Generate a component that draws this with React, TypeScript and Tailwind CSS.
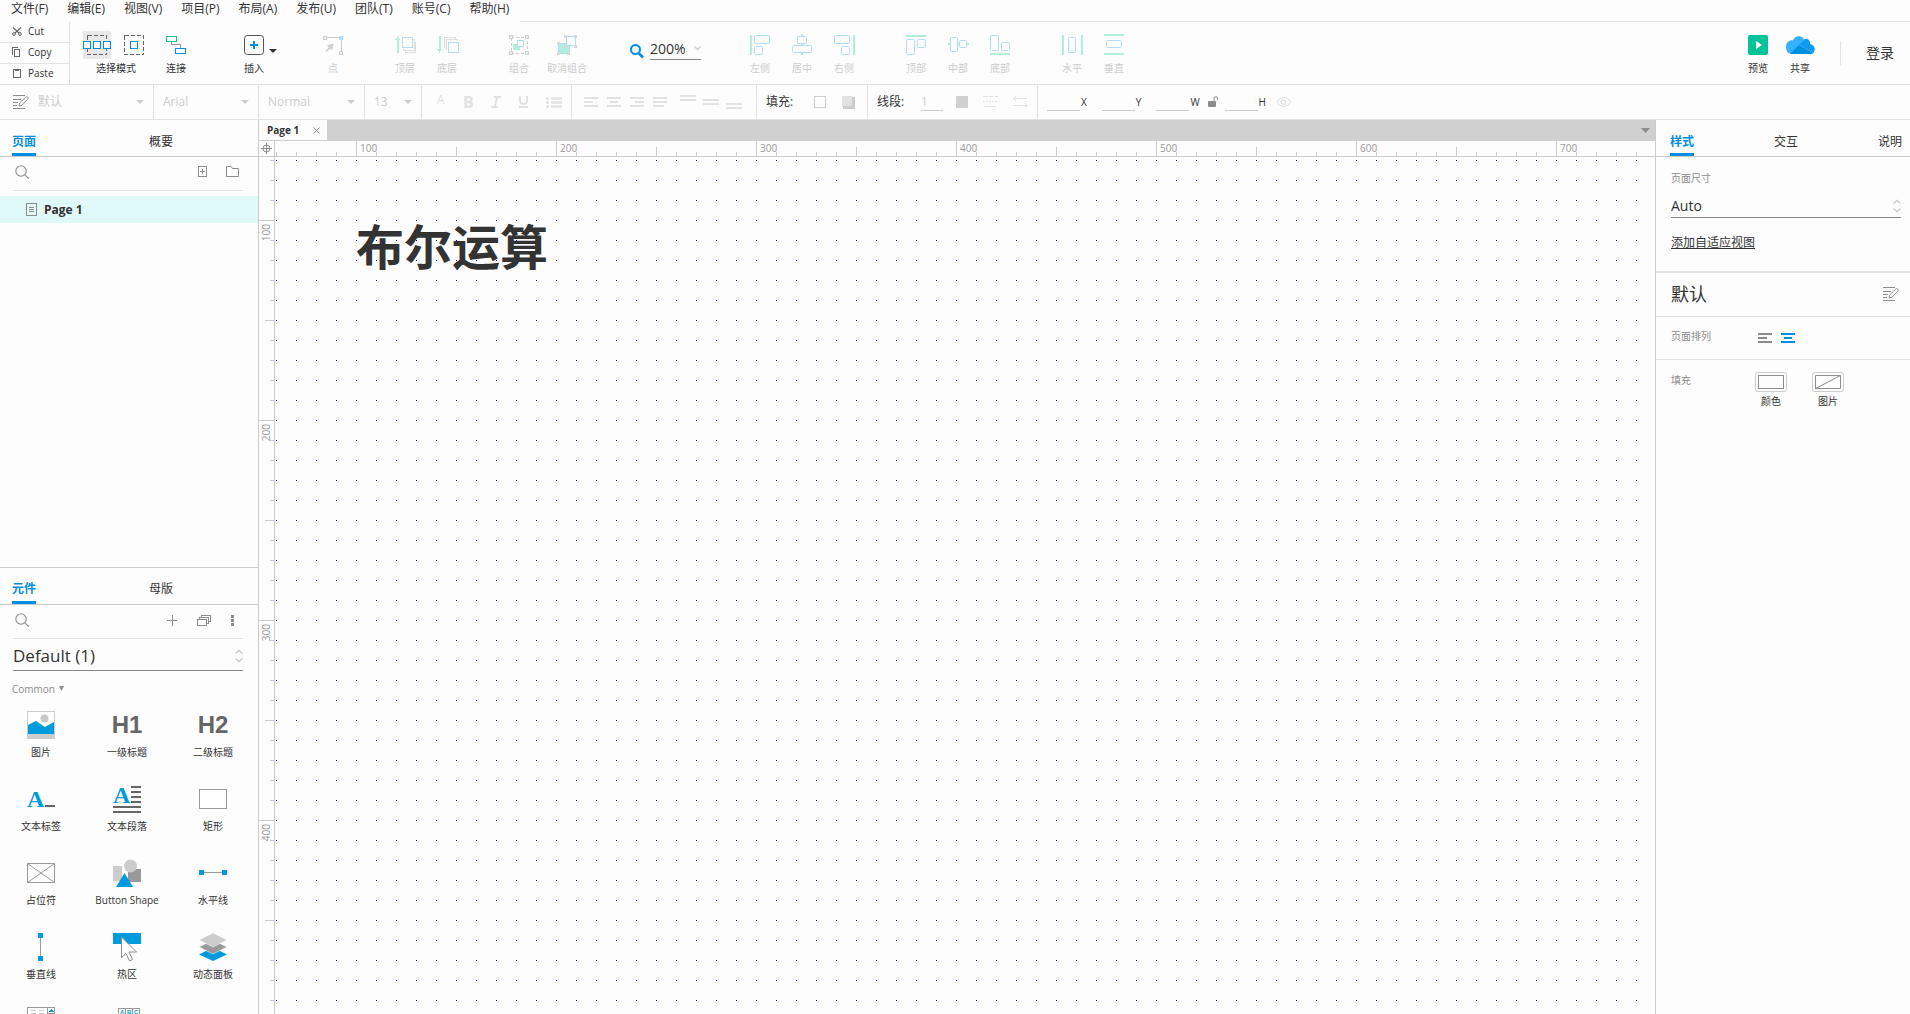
import type { ReactNode } from "react";

const menus = ["文件(F)", "编辑(E)", "视图(V)", "项目(P)", "布局(A)", "发布(U)", "团队(T)", "账号(C)", "帮助(H)"];

const hMarks = [100, 200, 300, 400, 500, 600, 700];
const vMarks = [100, 200, 300, 400];

type SvgProps = { w: number; h: number; children: ReactNode; smooth?: boolean };

function Svg({ w, h, children, smooth }: SvgProps) {
  return (
    <svg
      width={w}
      height={h}
      viewBox={`0 0 ${w} ${h}`}
      fill="none"
      shapeRendering={smooth ? "auto" : "crispEdges"}
      className="block shrink-0 overflow-visible"
      aria-hidden="true"
    >
      {children}
    </svg>
  );
}

/* ---------- small shared icons ---------- */

function Caret({ color = "#ccc" }: { color?: string }) {
  return (
    <Svg w={8} h={4} smooth>
      <path d="M0 0h8L4 4z" fill={color} />
    </Svg>
  );
}

function UpDown() {
  return (
    <Svg w={8} h={14} smooth>
      <path d="M0.5 4.5 4 1.5 7.5 4.5M0.5 9.5 4 12.5 7.5 9.5" stroke="#ccc" strokeWidth="1.4" />
    </Svg>
  );
}

function SearchIcon() {
  return (
    <Svg w={14} h={14} smooth>
      <circle cx="6" cy="6" r="5.2" stroke="#8c8c8c" strokeWidth="1.1" />
      <path d="m9.8 9.8 4 4" stroke="#8c8c8c" strokeWidth="1.1" />
    </Svg>
  );
}

function StyleIcon() {
  return (
    <Svg w={16} h={14} smooth>
      <path d="M0 .5h12M0 4.5h8M0 7.5h5M0 10.5h4M0 13.5h12" stroke="#8c8c8c" />
      <path d="m6 11 .8-3.2 5.8-5.6a1.4 1.4 0 0 1 2.2 2L9 10.2z" stroke="#8c8c8c" fill="#fdfdfd" />
    </Svg>
  );
}

const G = "#b0eede";
const B = "#b3ddf5";
const H = "#d0d0d0";

function Handle({ x, y, fill = "#eee", stroke = H }: { x: number; y: number; fill?: string; stroke?: string }) {
  return <rect x={x + 0.5} y={y + 0.5} width="3" height="3" fill={fill} stroke={stroke} />;
}

/* ---------- toolbar ---------- */

type ToolProps = { label: string; wide?: boolean; active?: boolean; children: ReactNode };

function Tool({ label, wide, active, children }: ToolProps) {
  return (
    <button type="button" className={`flex flex-col items-center ${wide ? "w-[54px]" : "w-[42px]"}`}>
      <span className="flex h-5 items-start justify-center">{children}</span>
      <span className={`mt-[5px] text-[10px] leading-4 whitespace-nowrap ${active ? "text-[#333]" : "text-[#ccc]"}`}>
        {label}
      </span>
    </button>
  );
}

function ClipboardActions() {
  const row = "flex flex-1 items-center gap-1.5 px-3 pb-0.5 text-[10px] leading-4";
  return (
    <div className="flex w-[70px] shrink-0 flex-col divide-y divide-[#e2e2e2] border-r border-[#e2e2e2]">
      <button type="button" className={row}>
        <Svg w={10} h={10} smooth>
          <path d="M1 1.5 7 7M9 1.5 3 7" stroke="#666" strokeWidth="1.1" />
          <circle cx="2" cy="8" r="1.4" stroke="#666" />
          <circle cx="8" cy="8" r="1.4" stroke="#666" />
        </Svg>
        Cut
      </button>
      <button type="button" className={row}>
        <Svg w={10} h={10}>
          <path d="M.5 7.500V.5h5M2.500 2.500h5v7h-5z" stroke="#666" />
        </Svg>
        Copy
      </button>
      <button type="button" className={row}>
        <Svg w={10} h={10}>
          <rect x="1.500" y="1.500" width="7" height="8" stroke="#666" />
          <path d="M3 1h4v2H3z" fill="#666" />
        </Svg>
        Paste
      </button>
    </div>
  );
}

function Toolbar() {
  return (
    <div className="flex h-[63px] shrink-0 border-b border-[#e2e2e2]">
      <ClipboardActions />
      <div className="flex min-w-0 flex-1 pt-[13px]">
        <div className="ml-[13px] w-[66px]">
          <div className="flex h-5 gap-[13px]">
            <button type="button" aria-label="相交选中" className="-mt-1 h-7 w-7 bg-[#e8e8e8]">
              <Svg w={28} h={28}>
                <rect x="4.500" y="4.500" width="19" height="19" stroke="#666" strokeDasharray="4 2" />
                <path d="M.5 10.500h7v7h-7zM10.500 10.500h7v7h-7zM20.500 10.500h7v7h-7z" fill="#fff" stroke="#008ee0" />
              </Svg>
            </button>
            <button type="button" aria-label="包含选中">
              <Svg w={20} h={20}>
                <rect x=".5" y=".5" width="19" height="19" stroke="#666" strokeDasharray="4 2" />
                <rect x="6.500" y="6.500" width="7" height="7" stroke="#008ee0" />
              </Svg>
            </button>
          </div>
          <div className="mt-[5px] text-center text-[10px] leading-4">选择模式</div>
        </div>
        <div className="ml-1.5 flex">
          <Tool label="连接" active>
            <Svg w={20} h={20}>
              <path d="M5.500 6v3.500h9V13" stroke="#999" />
              <rect x=".5" y="1.500" width="10" height="5" stroke="#00c398" />
              <rect x="9.500" y="13.500" width="10" height="5" stroke="#008ee0" />
            </Svg>
          </Tool>
        </div>
        <div className="ml-9 flex w-[79px]">
          <Tool label="插入" active>
            <Svg w={20} h={20} smooth>
              <rect x=".5" y=".5" width="19" height="19" rx="3" stroke="#555" />
              <path d="M10 6v8M6 10h8" stroke="#008ee0" strokeWidth="2" />
            </Svg>
          </Tool>
          <button type="button" aria-label="更多插入" className="-ml-1.5 h-8">
            <Caret color="#333" />
          </button>
        </div>
        <div className="flex gap-[30px]">
          <Tool label="点">
            <Svg w={20} h={20} smooth>
              <path d="M4 2.500h13M18.500 4v13" stroke="#ccc" />
              <Handle x={0} y={1} />
              <Handle x={16} y={1} fill={B} stroke={B} />
              <Handle x={16} y={16} />
              <path d="M10.500 8.500 9 15.500 7.300 13.500 3.500 17 2.500 16 6 12.200 4 10.500z" fill="#ccc" />
            </Svg>
          </Tool>
          <div className="flex">
            <Tool label="顶层">
              <Svg w={21} h={20}>
                <path d="M1.500 4h2v14h-2z" fill={G} />
                <path d="M2.500 1 5 5H0z" fill={G} />
                <path d="M18 4.500h1.500v11h-11V14M19 7h1.500v10.500h-10V16" stroke="#ddd" />
                <rect x="7" y="2" width="10" height="10" stroke={B} strokeWidth="1" fill="#fdfdfd" />
              </Svg>
            </Tool>
            <Tool label="底层">
              <Svg w={21} h={20}>
                <path d="M1.500 1h2v14h-2z" fill={G} />
                <path d="M2.500 18 5 14H0z" fill={G} />
                <path d="M7.500 13V2.500h11V4M9.500 15V4.500h11V6" stroke="#ddd" />
                <rect x="11" y="7" width="10" height="10" stroke={B} fill="#fdfdfd" />
              </Svg>
            </Tool>
          </div>
          <div className="flex">
            <Tool label="组合">
              <Svg w={20} h={20}>
                <rect x="2" y="2" width="16" height="16" stroke="#ccc" strokeDasharray="3 2" />
                <rect x="4" y="9" width="7" height="6" fill={G} />
                <rect x="8.500" y="5.500" width="6" height="6" stroke={B} fill="#fdfdfd" />
                <Handle x={0} y={0} />
                <Handle x={16} y={0} />
                <Handle x={0} y={16} />
                <Handle x={16} y={16} />
              </Svg>
            </Tool>
            <Tool label="取消组合" wide>
              <Svg w={20} h={20}>
                <rect x="1" y="8" width="11" height="10" fill={G} stroke={B} />
                <rect x="9" y="1.500" width="9" height="9" stroke={B} fill="#fdfdfd" />
                <g shapeRendering="crispEdges" fill="#d8d8d8">
                  <path d="M7 0h3v3H7zM17 0h3v3h-3zM17 10h3v3h-3zM7 10h3v3H7zM0 7h3v3H0zM0 17h3v3H0zM10 17h3v3h-3z" />
                </g>
              </Svg>
            </Tool>
          </div>
        </div>
        <div className="ml-9 flex h-[25px] items-end">
          <label htmlFor="zoom" aria-label="缩放" className="mr-1.5 mb-0.5">
            <Svg w={14} h={14} smooth>
              <circle cx="5.500" cy="5.500" r="4.500" stroke="#008ee0" strokeWidth="2" />
              <path d="m9 9.500 4 4" stroke="#008ee0" strokeWidth="2.500" />
            </Svg>
          </label>
          <div className="flex w-[51px] items-center border-b border-[#888]">
            <input id="zoom" defaultValue="200%" className="h-[22px] w-11 bg-transparent text-sm outline-none" />
            <Svg w={7} h={4} smooth>
              <path d="m.5.5 3 3 3-3" stroke="#ccc" strokeWidth="1.300" />
            </Svg>
          </div>
        </div>
        <div className="ml-[38px] flex gap-[30px]">
          <div className="flex">
            <Tool label="左侧">
              <Svg w={20} h={20} smooth>
                <path d="M0 0h2v20H0z" fill={G} />
                <rect x="4.500" y=".5" width="15" height="8" rx="1" stroke={B} />
                <rect x="4.500" y="11.500" width="8" height="8" rx="1" stroke={B} />
              </Svg>
            </Tool>
            <Tool label="居中">
              <Svg w={20} h={20} smooth>
                <path d="M9-1h2v21H9z" fill={G} />
                <rect x="5.500" y="1.500" width="9" height="7" rx="1" stroke={B} fill="#fdfdfd" />
                <rect x=".5" y="10.500" width="19" height="7" rx="1" stroke={B} fill="#fdfdfd" />
              </Svg>
            </Tool>
            <Tool label="右侧">
              <Svg w={21} h={20} smooth>
                <path d="M19 0h2v20h-2z" fill={G} />
                <rect x=".5" y=".5" width="15" height="8" rx="1" stroke={B} />
                <rect x="7.500" y="11.500" width="8" height="8" rx="1" stroke={B} />
              </Svg>
            </Tool>
          </div>
          <div className="flex">
            <Tool label="顶部">
              <Svg w={20} h={20} smooth>
                <path d="M0 0h20v2H0z" fill={G} />
                <rect x=".5" y="4.500" width="8" height="15" rx="1" stroke={B} />
                <rect x="11.500" y="4.500" width="8" height="8" rx="1" stroke={B} />
              </Svg>
            </Tool>
            <Tool label="中部">
              <Svg w={21} h={20} smooth>
                <path d="M0 8h21v2H0z" fill={G} />
                <rect x="2.500" y="2.500" width="7" height="14" rx="1" stroke={B} fill="#fdfdfd" />
                <rect x="11.500" y="5.500" width="7" height="7" rx="1" stroke={B} fill="#fdfdfd" />
              </Svg>
            </Tool>
            <Tool label="底部">
              <Svg w={20} h={20} smooth>
                <path d="M0 18h20v2H0z" fill={G} />
                <rect x=".5" y=".5" width="8" height="15" rx="1" stroke={B} />
                <rect x="11.500" y="7.500" width="8" height="8" rx="1" stroke={B} />
              </Svg>
            </Tool>
          </div>
          <div className="flex">
            <Tool label="水平">
              <Svg w={21} h={20} smooth>
                <path d="M0 0h2v20H0zM19 0h2v20h-2z" fill={G} />
                <rect x="6.500" y="2.500" width="7" height="15" rx="1" stroke={B} />
              </Svg>
            </Tool>
            <Tool label="垂直">
              <Svg w={20} h={20} smooth>
                <path d="M0-1h20v2H0zM0 18h20v2H0z" fill={G} />
                <rect x="2.500" y="5.500" width="15" height="7" rx="1" stroke={B} />
              </Svg>
            </Tool>
          </div>
        </div>
        <div className="ml-auto flex">
          <Tool label="预览" active>
            <Svg w={20} h={20} smooth>
              <rect width="20" height="20" rx="2" fill="#00c398" />
              <path d="m8 6 6 4-6 4z" fill="#fff" />
            </Svg>
          </Tool>
          <Tool label="共享" active>
            <Svg w={30} h={20} smooth>
              <path d="M6 19a6 7 0 0 1-1-13.500 5 5 0 0 1 3 0 6 6 0 0 1 11-1L14 11z" fill="#35b2ff" />
              <path d="M14 10 19 4.500a4 4 0 0 1 6 4.500 5.500 5.500 0 0 1 3.500 9z" fill="#0f9cf0" />
              <path d="M5 19 14 10l14.500 8q-1 1-3 1z" fill="#008ee0" />
            </Svg>
          </Tool>
          <div className="mt-1.5 ml-[19px] h-6 w-px bg-[#e2e2e2]" />
          <a href="#login" className="mt-2 mr-4 ml-[25px] text-sm leading-5">
            登录
          </a>
        </div>
      </div>
    </div>
  );
}

/* ---------- format bar ---------- */

function BarSelect({ label, value, className }: { label: string; value: string; className: string }) {
  return (
    <div className={`flex h-full shrink-0 items-center border-r border-[#e2e2e2] pr-[9px] ${className}`}>
      <select aria-label={label} className="min-w-0 flex-1 appearance-none bg-transparent text-xs text-[#ccc] outline-none">
        <option>{value}</option>
      </select>
      <Caret />
    </div>
  );
}

function IconButton({ label, children }: { label: string; children: ReactNode }) {
  return (
    <button type="button" aria-label={label} className="flex shrink-0 items-center justify-center">
      {children}
    </button>
  );
}

function Coord({ name }: { name: string }) {
  return (
    <label className="flex items-center text-[10px] leading-4">
      <input className="h-[17px] w-[33px] border-b border-[#ccc] bg-transparent outline-none" />
      <span className="ml-px">{name}</span>
    </label>
  );
}

function FormatBar() {
  const group = "flex h-full shrink-0 items-center border-r border-[#e2e2e2]";
  return (
    <div className="flex h-[35px] shrink-0 items-center border-b border-[#e2e2e2]">
      <div className="pl-[13px]">
        <StyleIcon />
      </div>
      <BarSelect label="样式" value="默认" className="w-[125px] pl-[9px]" />
      <BarSelect label="字体" value="Arial" className="w-[105px] pl-[9px]" />
      <BarSelect label="字重" value="Normal" className="w-[106px] pl-[9px]" />
      <BarSelect label="字号" value="13" className="w-[57px] pl-[9px]" />
      <div className={`${group} w-[150px] gap-[18px] pl-3.5 text-[#e2e2e2]`}>
        <button type="button" className="w-[9px] pb-1 text-xs leading-4">
          A
        </button>
        <button type="button" className="w-[10px] text-base leading-5 font-bold">
          B
        </button>
        <IconButton label="斜体">
          <Svg w={10} h={12} smooth>
            <path d="M3 1h7M0 11h7M6.500 1 3.500 11" stroke="#e2e2e2" strokeWidth="2" />
          </Svg>
        </IconButton>
        <IconButton label="下划线">
          <Svg w={9} h={12} smooth>
            <path d="M1 0v5a3.500 3 0 0 0 7 0V0M0 11h9" stroke="#e2e2e2" strokeWidth="2" />
          </Svg>
        </IconButton>
        <IconButton label="项目符号">
          <Svg w={16} h={11} smooth>
            <path d="M5 1.500h11M5 5.500h11M5 9.500h11" stroke="#e2e2e2" strokeWidth="2.500" />
            <circle cx="1.500" cy="1.500" r="1.500" fill="#e2e2e2" />
            <circle cx="1.500" cy="5.500" r="1.500" fill="#e2e2e2" />
            <circle cx="1.500" cy="9.500" r="1.500" fill="#e2e2e2" />
          </Svg>
        </IconButton>
      </div>
      <div className={`${group} w-[185px] gap-[9px] pl-3`}>
        <IconButton label="左对齐">
          <Svg w={14} h={14}>
            <path d="M0 3h14M0 7h9M0 11h14" stroke="#e2e2e2" strokeWidth="2" />
          </Svg>
        </IconButton>
        <IconButton label="居中对齐">
          <Svg w={14} h={14}>
            <path d="M0 3h14M3 7h8M0 11h14" stroke="#e2e2e2" strokeWidth="2" />
          </Svg>
        </IconButton>
        <IconButton label="右对齐">
          <Svg w={14} h={14}>
            <path d="M0 3h14M5 7h9M0 11h14" stroke="#e2e2e2" strokeWidth="2" />
          </Svg>
        </IconButton>
        <IconButton label="两端对齐">
          <Svg w={14} h={14}>
            <path d="M0 3h14M0 7h14M0 11h11" stroke="#e2e2e2" strokeWidth="2" />
          </Svg>
        </IconButton>
        <div className="ml-1 flex gap-[7px]">
          <IconButton label="顶部对齐">
            <Svg w={16} h={14}>
              <path d="M0 1h16M0 5h16" stroke="#e2e2e2" strokeWidth="2" />
            </Svg>
          </IconButton>
          <IconButton label="中部对齐">
            <Svg w={16} h={14}>
              <path d="M0 5h16M0 9h16" stroke="#e2e2e2" strokeWidth="2" />
            </Svg>
          </IconButton>
          <IconButton label="底部对齐">
            <Svg w={16} h={14}>
              <path d="M0 9h16M0 13h16" stroke="#e2e2e2" strokeWidth="2" />
            </Svg>
          </IconButton>
        </div>
      </div>
      <div className={`${group} w-[111px] pl-[9px]`}>
        <span className="w-12 text-xs leading-4 whitespace-nowrap">填充:</span>
        <IconButton label="填充颜色">
          <span className="size-3 border border-[#d0d0d0]" />
        </IconButton>
        <span className="w-4" />
        <IconButton label="阴影">
          <Svg w={13} h={13}>
            <rect x="1" y="1" width="12" height="12" fill="#ccc" />
            <rect width="10" height="10" fill="#e2e2e2" />
          </Svg>
        </IconButton>
      </div>
      <div className={`${group} w-[170px] pl-[9px]`}>
        <label htmlFor="line" className="w-11 text-xs leading-4 whitespace-nowrap">
          线段:
        </label>
        <input id="line" defaultValue="1" className="h-[17px] w-[22px] border-b border-[#ccc] bg-transparent text-xs text-[#ccc] outline-none" />
        <div className="ml-[13px] flex items-center gap-[15px]">
          <IconButton label="线段颜色">
            <span className="size-3 bg-[#d0d0d0]" />
          </IconButton>
          <IconButton label="线型">
            <Svg w={15} h={12}>
              <path d="M0 .5h15" stroke="#e2e2e2" strokeDasharray="5 1" />
              <path d="M0 5.500h15" stroke="#e2e2e2" strokeDasharray="2 1" />
              <path d="M1 10.500h12" stroke="#e2e2e2" />
            </Svg>
          </IconButton>
          <IconButton label="箭头">
            <Svg w={15} h={12} smooth>
              <path d="M0 2.500h14M3 0 .5 2.500 3 5M0 9.500h14M12 7l2.500 2.500L12 12" stroke="#e2e2e2" />
            </Svg>
          </IconButton>
        </div>
      </div>
      <div className="flex items-center pl-[9px]">
        <div className="flex gap-[15px]">
          <Coord name="X" />
          <Coord name="Y" />
          <Coord name="W" />
        </div>
        <button type="button" aria-label="锁定宽高比" className="mr-[7px] ml-2">
          <Svg w={10} h={12} smooth>
            <rect y="5" width="8" height="6" rx="1" fill="#8c8c8c" />
            <path d="M6 5V2.500a1.800 1.800 0 0 1 3.600 0V4" stroke="#8c8c8c" />
          </Svg>
        </button>
        <Coord name="H" />
        <button type="button" aria-label="隐藏" className="ml-2.5">
          <Svg w={15} h={10} smooth>
            <path d="M.5 5C4-.8 11-.8 14.500 5 11 10.800 4 10.800.5 5z" stroke="#ddd" />
            <circle cx="7.500" cy="5" r="2.300" stroke="#ddd" />
          </Svg>
        </button>
      </div>
    </div>
  );
}

/* ---------- side panels ---------- */

function Tab({ name, active, className = "" }: { name: string; active?: boolean; className?: string }) {
  return (
    <button type="button" className={`flex h-full flex-col items-start text-xs leading-4 ${className}`}>
      <span className={`flex h-full items-center border-b-[3px] pt-2.5 ${active ? "border-[#008ee0] font-bold text-[#008ee0]" : "border-transparent"}`}>
        {name}
      </span>
    </button>
  );
}

function PagesPanel() {
  return (
    <section className="flex min-h-0 flex-1 flex-col">
      <div className="flex h-[37px] shrink-0 border-b border-[#ccc] pl-3">
        <Tab name="页面" active className="w-[137px]" />
        <Tab name="概要" />
      </div>
      <div className="mr-[15px] ml-[13px] flex h-[34px] items-center border-b border-[#e2e2e2] pr-1 pb-1 pl-0.5">
        <IconButton label="搜索页面">
          <SearchIcon />
        </IconButton>
        <div className="ml-auto flex gap-[19px]">
          <IconButton label="添加页面">
            <Svg w={9} h={11}>
              <rect x=".5" y=".5" width="8" height="10" stroke="#8c8c8c" />
              <path d="M2 5.500h5M4.500 3v5" stroke="#8c8c8c" />
            </Svg>
          </IconButton>
          <IconButton label="添加文件夹">
            <Svg w={13} h={11} smooth>
              <path d="M.5 10.500V.5h4.500l1.500 2h6v8z" stroke="#8c8c8c" />
            </Svg>
          </IconButton>
        </div>
      </div>
      <a href="#page1" className="mt-[5px] flex h-[27px] shrink-0 items-center gap-[7px] bg-[#e0fafa] pl-[26px] text-xs font-bold">
        <Svg w={11} h={13}>
          <rect x=".5" y=".5" width="10" height="12" stroke="#8c8c8c" />
          <path d="M3 4.500h5M3 6.500h5M3 8.500h5" stroke="#8c8c8c" />
        </Svg>
        Page 1
      </a>
    </section>
  );
}

const BLUE = "#009bdd";

const widgets: { id: string; name?: string; icon: ReactNode }[] = [
  {
    id: "image",
    name: "图片",
    icon: (
      <Svg w={28} h={28} smooth>
        <rect x=".5" y=".5" width="27" height="27" stroke="#ccc" fill="#fff" />
        <path d="M1 23h26v5H1z" fill="#ccc" />
        <circle cx="17.500" cy="7.500" r="4" fill="#c8c8c8" />
        <path d="M1 14 9 10l9 6 9-5v12H1z" fill={BLUE} />
      </Svg>
    ),
  },
  {
    id: "h1",
    name: "一级标题",
    icon: <span className="font-['Liberation_Sans',sans-serif] text-2xl leading-7 font-bold text-[#666]">H1</span>,
  },
  {
    id: "h2",
    name: "二级标题",
    icon: <span className="font-['Liberation_Sans',sans-serif] text-2xl leading-7 font-bold text-[#666]">H2</span>,
  },
  {
    id: "label",
    name: "文本标签",
    icon: (
      <Svg w={28} h={28}>
        <text x="0" y="22" fontSize="24" fontWeight="bold" fontFamily="Liberation Serif, serif" fill={BLUE}>
          A
        </text>
        <path d="M18 20h10v2H18z" fill="#666" />
      </Svg>
    ),
  },
  {
    id: "paragraph",
    name: "文本段落",
    icon: (
      <Svg w={28} h={28}>
        <text x="0" y="18" fontSize="24" fontWeight="bold" fontFamily="Liberation Serif, serif" fill={BLUE}>
          A
        </text>
        <path d="M18 2h10M18 7h10M18 12h10M18 17h10M0 22h28M0 27h28" stroke="#666" strokeWidth="2" />
      </Svg>
    ),
  },
  {
    id: "rect",
    name: "矩形",
    icon: (
      <Svg w={28} h={28}>
        <rect x=".5" y="4.500" width="27" height="19" stroke="#999" fill="#fff" />
      </Svg>
    ),
  },
  {
    id: "placeholder",
    name: "占位符",
    icon: (
      <Svg w={28} h={28} smooth>
        <path d="M.5 4.500h27v19H.5zl27 19M27.500 4.500l-27 19" stroke="#999" fill="#fff" />
      </Svg>
    ),
  },
  {
    id: "shape",
    name: "Button Shape",
    icon: (
      <Svg w={28} h={28} smooth>
        <path d="M0 7h9v15H0z" fill="#ccc" />
        <path d="M15 10h13v13H15z" fill="#999" />
        <circle cx="17.500" cy="7" r="6.500" fill="#ccc" />
        <path d="m11.500 14 8.500 14H3z" fill={BLUE} />
      </Svg>
    ),
  },
  {
    id: "hline",
    name: "水平线",
    icon: (
      <Svg w={28} h={28}>
        <path d="M4 13.500h20" stroke="#999" />
        <path d="M0 11h5v5H0zM23 11h5v5h-5z" fill={BLUE} />
      </Svg>
    ),
  },
  {
    id: "vline",
    name: "垂直线",
    icon: (
      <Svg w={28} h={28}>
        <path d="M13.500 4v20" stroke="#999" />
        <path d="M11 0h5v5h-5zM11 23h5v5h-5z" fill={BLUE} />
      </Svg>
    ),
  },
  {
    id: "hotspot",
    name: "热区",
    icon: (
      <Svg w={28} h={28} smooth>
        <path d="M0 0h28v11H0z" fill={BLUE} />
        <path d="M8.500 4v20.500l4.500-4 3.500 7.500 3-1.500-3.500-7.500h7.500z" fill="#fff" stroke="#8c8c8c" />
      </Svg>
    ),
  },
  {
    id: "panel",
    name: "动态面板",
    icon: (
      <Svg w={28} h={28} smooth>
        <path d="m14 14.500 14 7-14 6.500-14-6.500z" fill={BLUE} />
        <path d="m14 7 14 7-14 7-14-7z" fill="#999" stroke="#fdfdfd" strokeWidth=".5" />
        <path d="m14 0 14 7-14 7L0 7z" fill="#ccc" stroke="#fdfdfd" strokeWidth=".5" />
      </Svg>
    ),
  },
  {
    id: "frame",
    icon: (
      <Svg w={28} h={28}>
        <rect x=".5" y=".5" width="27" height="27" stroke="#999" fill="#fff" />
        <path d="M20.500 0v28M20 6.500h8" stroke="#999" />
        <path d="M4 3.500h5M12 3.500h5M4 6.500h5M12 6.500h5" stroke="#ccc" />
        <path d="m24 2 3 3h-6z" fill={BLUE} />
      </Svg>
    ),
  },
  {
    id: "repeater",
    icon: (
      <Svg w={28} h={28}>
        <path d="M5.500 1.500h21v26h-21zM12.500 1v27M19.500 1v27M5 8.500h22" stroke="#999" fill="#fff" />
        <text x="7" y="7" fontSize="6" fontWeight="bold" fontFamily="Liberation Sans, sans-serif" fill={BLUE}>
          A
        </text>
        <text x="14" y="7" fontSize="6" fontWeight="bold" fontFamily="Liberation Sans, sans-serif" fill={BLUE}>
          B
        </text>
        <text x="21" y="7" fontSize="6" fontWeight="bold" fontFamily="Liberation Sans, sans-serif" fill={BLUE}>
          C
        </text>
      </Svg>
    ),
  },
];

function WidgetsPanel() {
  return (
    <section className="flex min-h-0 flex-1 flex-col overflow-hidden border-t border-[#ccc]">
      <div className="flex h-[37px] shrink-0 border-b border-[#ccc] pl-3">
        <Tab name="元件" active className="w-[137px]" />
        <Tab name="母版" />
      </div>
      <div className="mr-[15px] ml-[13px] flex h-[34px] shrink-0 items-center border-b border-[#e2e2e2] pb-0.5 pl-0.5">
        <IconButton label="搜索元件">
          <SearchIcon />
        </IconButton>
        <div className="ml-auto flex items-center gap-5 pr-[9px]">
          <IconButton label="添加">
            <Svg w={10} h={10}>
              <path d="M0 5.500h10M5.500 0v11" stroke="#8c8c8c" />
            </Svg>
          </IconButton>
          <IconButton label="元件库">
            <Svg w={14} h={11}>
              <path d="M.5 4.500h9v6h-9zM2.500 4V2.500h9v6H10M4.500 2V.5h9v6H12" stroke="#8c8c8c" />
            </Svg>
          </IconButton>
          <IconButton label="选项">
            <Svg w={3} h={11} smooth>
              <path d="M0 0h3v3H0zM0 4h3v3H0zM0 8h3v3H0z" fill="#8c8c8c" />
            </Svg>
          </IconButton>
        </div>
      </div>
      <div className="mr-[15px] ml-[13px] flex h-8 shrink-0 items-center border-b border-[#888] pt-1">
        <select aria-label="元件库" className="flex-1 appearance-none bg-transparent text-[17px] leading-6 outline-none">
          <option>Default (1)</option>
        </select>
        <UpDown />
      </div>
      <button type="button" className="mt-2.5 ml-3 flex items-center gap-1 self-start text-[10px] leading-4 text-[#8c8c8c]">
        Common
        <Svg w={5} h={5} smooth>
          <path d="M0 0h5L2.500 5z" fill="#8c8c8c" />
        </Svg>
      </button>
      <ul className="mt-3.5 mr-0.5 -ml-0.5 grid grid-cols-3">
        {widgets.map((w) => (
          <li key={w.id} className="flex h-[74px] flex-col items-center">
            <span className="flex h-7 items-start">{w.icon}</span>
            {w.name && <span className="mt-[5px] text-[10px] leading-4 whitespace-nowrap">{w.name}</span>}
          </li>
        ))}
      </ul>
    </section>
  );
}

function StylePanel() {
  return (
    <aside className="w-[255px] shrink-0 border-l border-[#ccc]">
      <div className="flex h-[37px] justify-between border-b border-[#ccc] pr-2 pl-3.5">
        <Tab name="样式" active />
        <Tab name="交互" />
        <Tab name="说明" />
      </div>
      <div className="border-b-2 border-[#e2e2e2] pt-[13px] pr-[9px] pb-[18px] pl-[15px]">
        <label htmlFor="size" className="block text-[10px] leading-4 text-[#8c8c8c]">
          页面尺寸
        </label>
        <div className="mt-2 flex h-6 items-center border-b border-[#888]">
          <select id="size" className="flex-1 appearance-none bg-transparent text-sm outline-none">
            <option>Auto</option>
          </select>
          <UpDown />
        </div>
        <a href="#adaptive" className="mt-[15px] block text-xs leading-5 underline">
          添加自适应视图
        </a>
      </div>
      <div className="flex h-[44px] items-center justify-between border-b border-[#e2e2e2] pr-[11px] pb-0.5 pl-[15px]">
        <h2 className="text-lg leading-6">默认</h2>
        <StyleIcon />
      </div>
      <div className="flex h-[43px] items-center border-b border-[#e2e2e2] pl-[15px]">
        <span className="w-[87px] pb-1 text-[10px] leading-4 text-[#8c8c8c]">页面排列</span>
        <div className="flex gap-[9px]">
          <IconButton label="左对齐页面">
            <Svg w={14} h={10}>
              <path d="M0 1h14M0 5h9M0 9h14" stroke="#8c8c8c" strokeWidth="2" />
            </Svg>
          </IconButton>
          <IconButton label="居中页面">
            <Svg w={14} h={10}>
              <path d="M0 1h14M3 5h8M0 9h14" stroke="#008ee0" strokeWidth="2" />
            </Svg>
          </IconButton>
        </div>
      </div>
      <div className="flex pt-3 pl-[15px]">
        <span className="w-[84px] text-[10px] leading-4 text-[#8c8c8c]">填充</span>
        <div className="flex gap-[25px] text-[10px] leading-4">
          <button type="button" className="flex flex-col items-center gap-px">
            <Svg w={32} h={20} smooth>
              <rect x=".5" y=".5" width="31" height="19" rx="2" stroke="#ccc" />
              <rect x="3.500" y="3.500" width="25" height="13" stroke="#8c8c8c" />
            </Svg>
            颜色
          </button>
          <button type="button" className="flex flex-col items-center gap-px">
            <Svg w={32} h={20} smooth>
              <rect x=".5" y=".5" width="31" height="19" rx="2" stroke="#ccc" />
              <path d="M3.500 3.500h25v13h-25zM3.500 16.500l25-13" stroke="#8c8c8c" />
            </Svg>
            图片
          </button>
        </div>
      </div>
    </aside>
  );
}

/* ---------- canvas ---------- */

function HorizontalRuler() {
  return (
    <div className="relative h-[15px] min-w-0 flex-1 overflow-hidden">
      <svg className="absolute inset-0 h-full w-full" shapeRendering="crispEdges" aria-hidden="true">
        <defs>
          <pattern id="hr" x="81" width="200" height="15" patternUnits="userSpaceOnUse">
            <path
              d="M.5 0v15M20.500 11v4M40.500 11v4M60.500 11v4M80.500 11v4M100.500 6v9M120.500 11v4M140.500 11v4M160.500 11v4M180.500 11v4"
              stroke="#ccc"
            />
          </pattern>
        </defs>
        <rect width="100%" height="100%" fill="url(#hr)" />
      </svg>
      <div className="flex pl-[81px]">
        {hMarks.map((m) => (
          <span key={m} className="w-[200px] shrink-0 pl-1 text-[10px] leading-[15px] text-[#999]">
            {m}
          </span>
        ))}
      </div>
    </div>
  );
}

function VerticalRuler() {
  return (
    <div className="relative w-4 shrink-0 overflow-hidden border-r border-[#ccc]">
      <svg className="absolute inset-0 h-full w-full" shapeRendering="crispEdges" aria-hidden="true">
        <defs>
          <pattern id="vr" y="63" width="15" height="200" patternUnits="userSpaceOnUse">
            <path
              d="M0 .5h15M11 20.500h4M11 40.500h4M11 60.500h4M11 80.500h4M6 100.500h9M11 120.500h4M11 140.500h4M11 160.500h4M11 180.500h4"
              stroke="#ccc"
            />
          </pattern>
        </defs>
        <rect width="100%" height="100%" fill="url(#vr)" />
      </svg>
      <div className="flex flex-col pt-[63px]">
        {vMarks.map((m) => (
          <span key={m} className="flex h-[200px] shrink-0 items-start pt-1 text-[10px] leading-[15px] text-[#999]">
            <span className="rotate-180 [writing-mode:vertical-rl]">{m}</span>
          </span>
        ))}
      </div>
    </div>
  );
}

function Canvas() {
  return (
    <main className="flex min-w-0 flex-1 flex-col">
      <div className="flex h-[21px] shrink-0 items-center justify-between border-b border-[#d0d0d0] bg-[#d0d0d0] pr-[5px]">
        <div className="flex h-full w-[68px] items-center justify-between bg-[#fdfdfd] pr-[7px] pl-2">
          <span className="text-[10px] leading-4 font-bold">Page 1</span>
          <button type="button" aria-label="关闭">
            <Svg w={7} h={7} smooth>
              <path d="m.5.5 6 6M6.500.5l-6 6" stroke="#8c8c8c" />
            </Svg>
          </button>
        </div>
        <button type="button" aria-label="页面列表">
          <Svg w={9} h={5} smooth>
            <path d="M0 0h9L4.500 5z" fill="#8c8c8c" />
          </Svg>
        </button>
      </div>
      <div className="flex h-4 shrink-0 border-b border-[#ccc]">
        <div className="flex w-4 shrink-0 items-center justify-center border-r border-[#ccc]">
          <Svg w={11} h={11} smooth>
            <circle cx="5.500" cy="5.500" r="3.500" stroke="#8c8c8c" />
            <path d="M0 5.500h11M5.500 0v11" stroke="#8c8c8c" />
          </Svg>
        </div>
        <HorizontalRuler />
      </div>
      <div className="flex min-h-0 flex-1">
        <VerticalRuler />
        <div className="relative min-w-0 flex-1 overflow-hidden">
          <svg className="absolute inset-0 h-full w-full" shapeRendering="crispEdges" aria-hidden="true">
            <defs>
              <pattern id="dots" x="1" y="3" width="20" height="20" patternUnits="userSpaceOnUse">
                <rect width="1" height="1" fill="#0000ff" />
              </pattern>
            </defs>
            <rect width="100%" height="100%" fill="url(#dots)" />
          </svg>
          <h1 className="absolute top-[54px] left-[81px] text-5xl leading-[72px] font-bold whitespace-nowrap">布尔运算</h1>
        </div>
      </div>
    </main>
  );
}

export default function App() {
  return (
    <div className="flex h-screen flex-col overflow-hidden bg-[#fdfdfd] font-['Open_Sans','Noto_Sans_CJK_SC',sans-serif] text-[#333]">
      <nav className="flex h-[22px] shrink-0 items-start">
        <div className="flex gap-[19px] px-[11px]">
          {menus.map((m) => (
            <a key={m} href="#menu" className="text-xs leading-[17px] whitespace-nowrap">
              {m}
            </a>
          ))}
        </div>
        <div className="h-full flex-1 border-b border-[#e2e2e2]" />
      </nav>
      <Toolbar />
      <FormatBar />
      <div className="flex min-h-0 flex-1">
        <aside className="flex w-[259px] shrink-0 flex-col border-r border-[#ccc]">
          <PagesPanel />
          <WidgetsPanel />
        </aside>
        <Canvas />
        <StylePanel />
      </div>
    </div>
  );
}
